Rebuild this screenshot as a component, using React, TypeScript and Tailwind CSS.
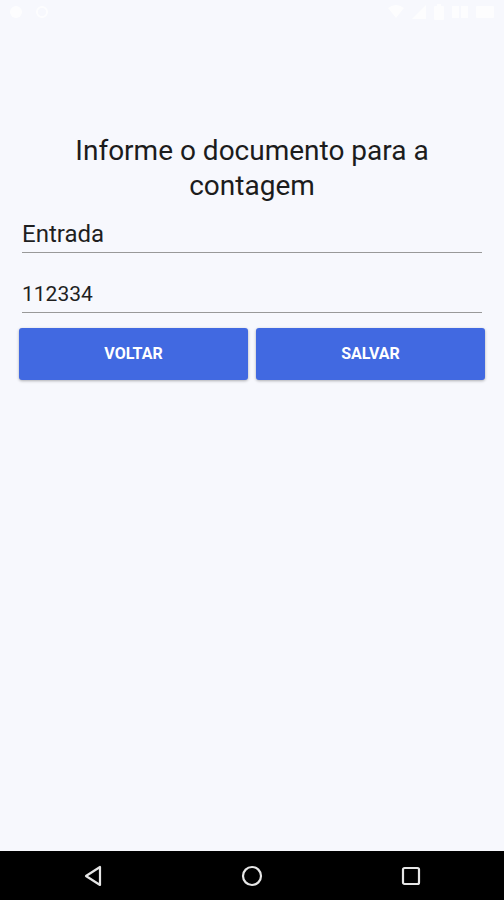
import React from "react";

export default function App() {
  return (
    <div
      className="w-[504px] h-[900px] flex flex-col bg-[#f7f8fd] overflow-hidden"
      style={{ fontFamily: "Roboto, 'Liberation Sans', sans-serif" }}
    >
      {/* status bar (white icons on light background) */}
      <div className="h-[24px] flex items-center justify-between px-[10px] shrink-0 opacity-80">
        <div className="flex items-center gap-[14px]">
          <div className="w-[12px] h-[12px] rounded-full bg-white" />
          <div className="w-[12px] h-[12px] rounded-full border-2 border-white" />
        </div>
        <div className="flex items-center gap-[8px]">
          <svg width="16" height="14" viewBox="0 0 16 14">
            <path d="M8 13 L0 3 Q8 -3 16 3 Z" fill="#ffffff" />
          </svg>
          <svg width="14" height="14" viewBox="0 0 14 14">
            <path d="M14 0 L14 14 L0 14 Z" fill="#ffffff" />
          </svg>
          <svg width="10" height="16" viewBox="0 0 10 16">
            <rect x="0" y="2" width="10" height="14" rx="1" fill="#ffffff" />
            <rect x="3" y="0" width="4" height="3" fill="#ffffff" />
          </svg>
          <svg width="16" height="12" viewBox="0 0 16 12">
            <rect x="0" y="0" width="7" height="12" fill="#ffffff" />
            <rect x="9" y="0" width="7" height="12" fill="#ffffff" />
          </svg>
          <svg width="18" height="12" viewBox="0 0 18 12">
            <rect x="0" y="0" width="18" height="12" rx="1" fill="#ffffff" />
          </svg>
        </div>
      </div>

      {/* content */}
      <div className="flex-1 flex flex-col px-[19px] pt-[109px]">
        <h1 className="text-center text-[28px] leading-[35px] text-[#1c1c1c] font-normal px-[30px]">
          Informe o documento para a contagem
        </h1>

        <div className="mt-[17px] mx-[3px] border-b-[1.5px] border-[#999999] pb-[4px]">
          <div className="text-[24px] leading-[28px] text-[#1f1f1f]">Entrada</div>
        </div>

        <div className="mt-[27px] mx-[3px] border-b-[1.5px] border-[#999999] pb-[4px]">
          <div className="text-[21px] leading-[28px] text-[#1f1f1f]">112334</div>
        </div>

        <div className="mt-[15px] flex gap-[8px]">
          <button className="flex-1 h-[52px] rounded-[3px] bg-[#4169e1] text-white text-[16px] font-bold shadow-[0_1px_3px_rgba(0,0,0,0.3)]">
            VOLTAR
          </button>
          <button className="flex-1 h-[52px] rounded-[3px] bg-[#4169e1] text-white text-[16px] font-bold shadow-[0_1px_3px_rgba(0,0,0,0.3)]">
            SALVAR
          </button>
        </div>
      </div>

      {/* navigation bar */}
      <div className="h-[49px] bg-black flex items-center justify-between px-[83px] shrink-0">
        <svg width="20" height="22" viewBox="0 0 20 22">
          <path d="M17 2 L17 20 L3 11 Z" fill="none" stroke="#e6e6e6" strokeWidth="2.2" strokeLinejoin="round" />
        </svg>
        <svg width="22" height="22" viewBox="0 0 22 22">
          <circle cx="11" cy="11" r="9" fill="none" stroke="#e6e6e6" strokeWidth="2.2" />
        </svg>
        <svg width="20" height="20" viewBox="0 0 20 20">
          <rect x="2" y="2" width="16" height="16" rx="1.5" fill="none" stroke="#e6e6e6" strokeWidth="2.2" />
        </svg>
      </div>
    </div>
  );
}
